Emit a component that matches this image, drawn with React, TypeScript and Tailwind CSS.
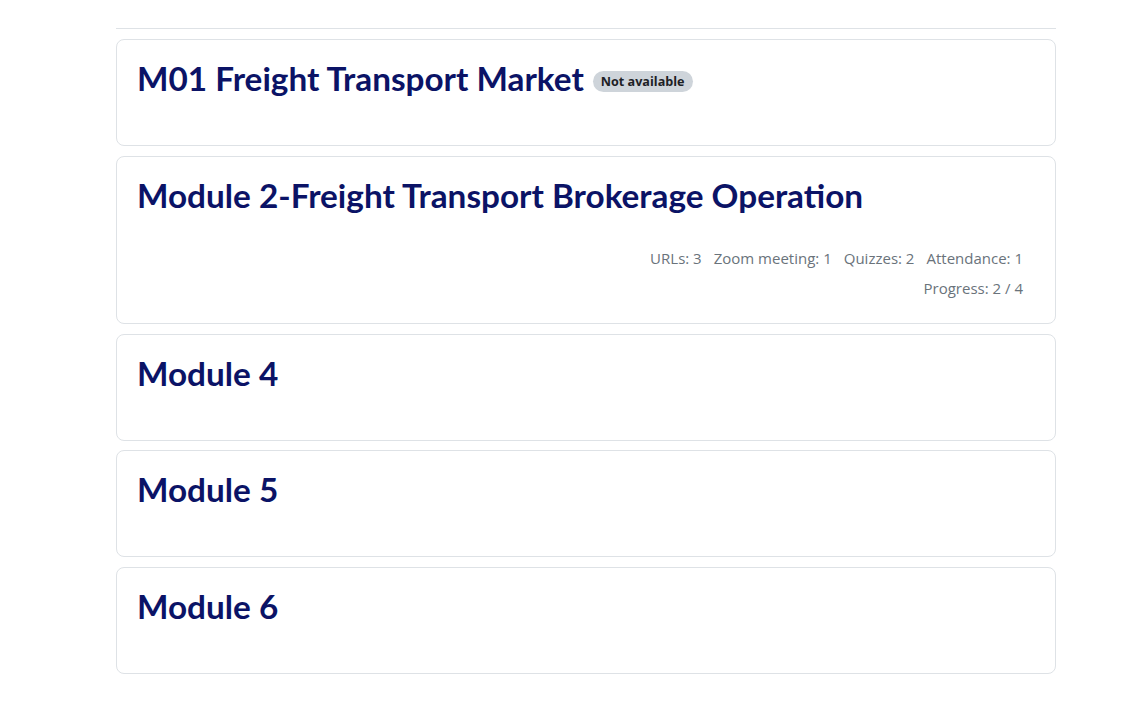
import React from 'react';

const sections = [
  { title: 'M01 Freight Transport Market', badge: 'Not available' },
  {
    title: 'Module 2-Freight Transport Brokerage Operation',
    stats: ['URLs: 3', 'Zoom meeting: 1', 'Quizzes: 2', 'Attendance: 1'],
    progress: 'Progress: 2 / 4',
  },
  { title: 'Module 4' },
  { title: 'Module 5' },
  { title: 'Module 6' },
];

export default function App() {
  return (
    <div className="min-h-[712px] bg-white font-['Open_Sans',sans-serif]">
      <div className="w-[940px] ml-[116px] pt-[28px] pb-10">
        <div className="border-t border-[#dee2e6]" />
        <ul className="mt-[10px] flex flex-col gap-[9.6px]">
          {sections.map((s) => (
            <li
              key={s.title}
              className="rounded-lg border border-[#dee2e6] px-5 pt-[18px] pb-[27px]"
            >
              <div className="flex items-center gap-[9px] min-h-[40px]">
                <h3 className="font-['Lato',sans-serif] text-[33.3px] font-bold leading-[40px] text-[#0b1366]">
                  {s.title}
                </h3>
                {s.badge && (
                  <span className="rounded-full bg-[#ced4da] px-2 py-[2px] text-[12.6px] font-bold text-[#1d2125] leading-[17px] mt-[6px]">
                    {s.badge}
                  </span>
                )}
              </div>
              <div className="h-[20px]" />
              {s.stats && (
                <div className="pr-[12px] pt-[8px] mb-[-6.6px] text-right text-[15px] text-[#6a737b]">
                  <div className="flex justify-end gap-3 leading-[30px]">
                    {s.stats.map((t) => (
                      <span key={t}>{t}</span>
                    ))}
                  </div>
                  <div className="leading-[30px] -mb-[1px]">{s.progress}</div>
                </div>
              )}
            </li>
          ))}
        </ul>
      </div>
    </div>
  );
}
